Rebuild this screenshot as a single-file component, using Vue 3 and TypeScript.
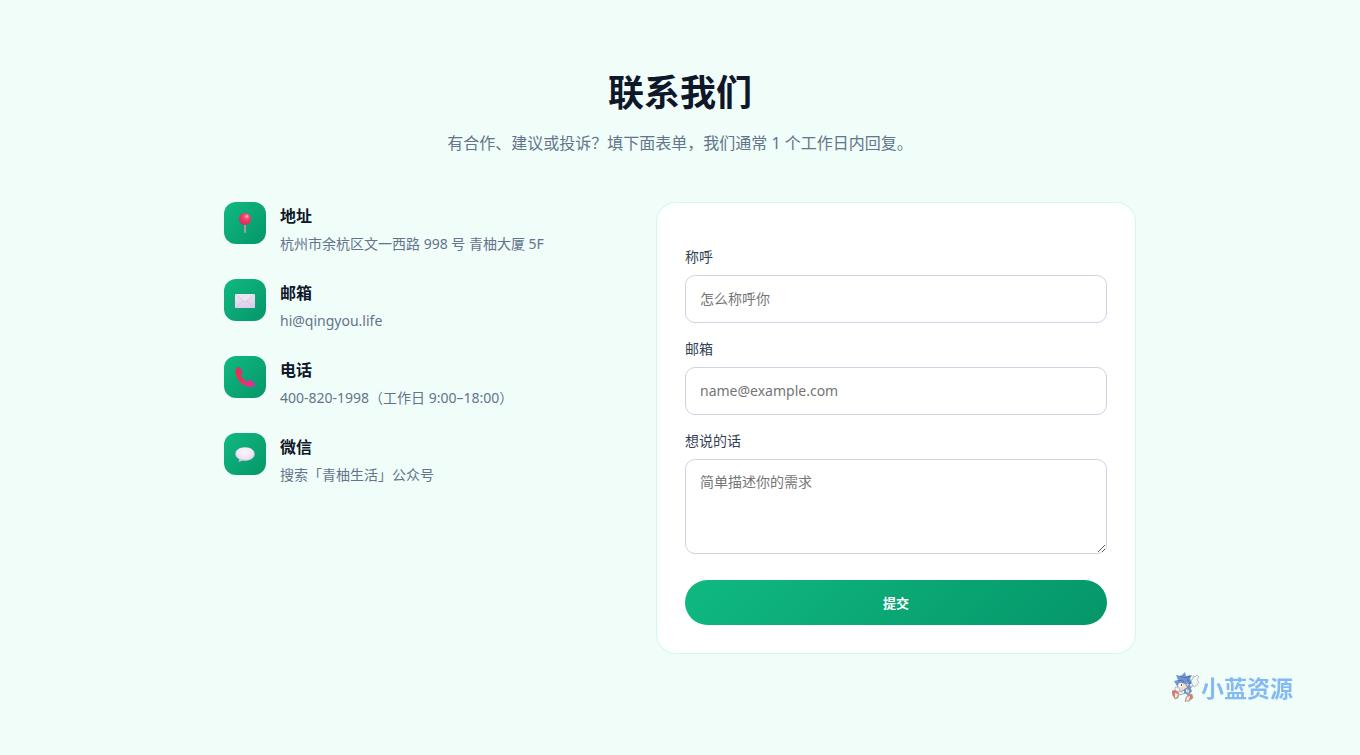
<script setup lang="ts">
import { reactive } from 'vue'

interface Contact {
  icon: 'pin' | 'mail' | 'phone' | 'chat'
  title: string
  text: string
}

const contacts: Contact[] = [
  { icon: 'pin', title: '地址', text: '杭州市余杭区文一西路 998 号 青柚大厦 5F' },
  { icon: 'mail', title: '邮箱', text: 'hi@qingyou.life' },
  { icon: 'phone', title: '电话', text: '400-820-1998（工作日 9:00–18:00）' },
  { icon: 'chat', title: '微信', text: '搜索「青柚生活」公众号' },
]

const form = reactive({ name: '', email: '', message: '' })
</script>

<template>
  <main class="page">
    <header class="intro">
      <h1>联系我们</h1>
      <p>有合作、建议或投诉？填下面表单，我们通常 1 个工作日内回复。</p>
    </header>

    <div class="columns">
      <ul class="contacts">
        <li v-for="item in contacts" :key="item.title" class="contact">
          <span class="badge" aria-hidden="true">
            <svg v-if="item.icon === 'pin'" viewBox="0 0 20 20">
              <defs>
                <radialGradient id="ball" cx=".62" cy=".3" r=".75">
                  <stop offset="0" stop-color="#ff6f8c" />
                  <stop offset=".5" stop-color="#f5345f" />
                  <stop offset="1" stop-color="#cf2a68" />
                </radialGradient>
              </defs>
              <rect x="9.1" y="10" width="1.9" height="10" rx=".8" fill="#9aa5ad" />
              <circle cx="10" cy="6" r="6" fill="url(#ball)" />
              <ellipse cx="12" cy="3.4" rx="1.5" ry="1.1" fill="#ffb3c0" />
            </svg>
            <svg v-else-if="item.icon === 'mail'" viewBox="0 0 20 20">
              <defs>
                <linearGradient id="paper" x1="0" y1="0" x2=".3" y2="1">
                  <stop offset="0" stop-color="#f0eaf2" />
                  <stop offset="1" stop-color="#decdf0" />
                </linearGradient>
              </defs>
              <rect y="4" width="20" height="14" rx=".6" fill="url(#paper)" />
              <path d="M.5 17.4 8.3 10.7M19.5 17.4l-7.800-6.700" fill="none" stroke="#cfc1da" stroke-width=".6" />
              <path d="M.4 4.500 9 11.300q1 .8 2 0l8.600-6.800" fill="#ece5f0" stroke="#cbbfd2" stroke-width=".6" />
            </svg>
            <svg v-else-if="item.icon === 'phone'" viewBox="0 0 20 20">
              <defs>
                <linearGradient id="handset" x1="0" y1="0" x2="1" y2="1">
                  <stop offset="0" stop-color="#e52f45" />
                  <stop offset=".55" stop-color="#ee2f67" />
                  <stop offset="1" stop-color="#e62da4" />
                </linearGradient>
              </defs>
              <path d="M2.500.6C1 1.300.200 3 .5 5.400c.9 7.200 6.600 13.100 13.400 14.300 2.600.4 4.800.1 5.700-1 .5-.8.300-1.500-.2-2.200l-3-3.200c-.7-.7-1.500-.7-2.200-.1l-1.300 1.200c-.5.4-1 .3-1.500 0-2.600-1.500-4.600-3.700-5.600-6.300-.2-.6-.1-1 .3-1.400l1.300-1c.5-.6.500-1.300 0-1.900L4.700.8C4 .1 3.300.200 2.500.6Z" fill="url(#handset)" />
              <path d="m3.900.6 4 4.600-.7 1.500-4.500-4.700ZM15.600 13.100l4 4-.9.900-4.800-4.100Z" fill="#b83b9d" opacity=".75" />
            </svg>
            <svg v-else viewBox="0 0 20 20">
              <defs>
                <radialGradient id="bubble" cx=".5" cy=".38" r=".65">
                  <stop offset="0" stop-color="#f8f5fa" />
                  <stop offset=".6" stop-color="#eee7f3" />
                  <stop offset="1" stop-color="#c5b0d6" />
                </radialGradient>
              </defs>
              <path d="M10 3.200c5.600 0 9.700 2.900 9.700 6.800S15.600 16.800 10 16.800c-1 0-2-.1-2.900-.3-.9.800-2 1.300-3.200 1.300-.4 0-.6-.4-.3-.7.500-.6.700-1.300.7-1.900C1.800 14 .3 12.200.3 10 .3 6.100 4.400 3.200 10 3.200Z" fill="url(#bubble)" />
            </svg>
          </span>
          <div>
            <h2>{{ item.title }}</h2>
            <p>{{ item.text }}</p>
          </div>
        </li>
      </ul>

      <form class="card" @submit.prevent>
        <label for="name">称呼</label>
        <input id="name" v-model="form.name" type="text" placeholder="怎么称呼你" />
        <label for="email">邮箱</label>
        <input id="email" v-model="form.email" type="email" placeholder="name@example.com" />
        <label for="message">想说的话</label>
        <textarea id="message" v-model="form.message" placeholder="简单描述你的需求"></textarea>
        <button type="submit">提交</button>
      </form>
    </div>

    <div class="watermark">
      <svg viewBox="0 0 28 32" aria-hidden="true">
        <path d="m17 18 4-5M11 20l-6-1M14 21l-7 2m8-1 2 4" fill="none" stroke="#aaa9ae" stroke-width="1.200" />
        <path d="M5 14 2 9l4-1-2-5 5 1 4-4 1 4 6-1-2 4 4 4-4 1 1 4-4 1-3 2-5-1Z" fill="#7095d3" />
        <path d="m8 4 5 2 5-2-3 4 4 3-5 1M6 9l4-1 2 3" fill="none" stroke="#4d70b3" stroke-width="1" />
        <path d="M6 14q0-4 4-3l3 1 2 3q-1 3-5 3-4 0-4-4Z" fill="#f1dfc9" />
        <path d="M7 12q3-2 4 1l-1 2-3-.5Z" fill="#fbfdf9" />
        <path d="M9.500 12v2" stroke="#536b63" stroke-width="1" />
        <path d="m15 11 2 1-1 2-2-1Z" fill="#eac98c" />
        <path d="m12 17 6-2 2 4-3 4-5-2Z" fill="#7193ce" />
        <path d="m14 17 3 1v3l-3-1Z" fill="#efdca6" />
        <path d="m20 12-1-4 2-1 0-3 2 1 2-2 2 2-2 3 2 2-2 3-3 2Z" fill="#f2f6f3" stroke="#a4aba8" stroke-width=".7" />
        <path d="m3 15 4 1 1 2-2 2-3-2Z" fill="#f0f3ef" stroke="#a4aba8" stroke-width=".6" />
        <path d="m0 19 3-1 4 3-1 5-3 1-3-5Z" fill="#df7770" stroke="#9b9693" stroke-width=".5" />
        <path d="m16 23 4-1 1 4-4 3-4 .5 1-4Z" fill="#df7770" stroke="#9b9693" stroke-width=".5" />
        <path d="m3 21 3 1-1 3-2 1ZM15 25l3-1-1 4-3 1Z" fill="#f1f1e9" />
      </svg>
      <span>小蓝资源</span>
    </div>
  </main>
</template>

<style>
body {
  margin: 0;
  background: #f0fdf9;
}
</style>

<style scoped>
.page {
  box-sizing: border-box;
  min-height: 100vh;
  max-width: 960px;
  margin: 0 auto;
  padding: 64px 24px;
  color: #0f172a;
  font-family: "Noto Sans", "Noto Sans CJK SC", sans-serif;
}

h1,
h2,
p,
ul {
  margin: 0;
  padding: 0;
}

.intro {
  text-align: center;
  margin-bottom: 46px;
}

h1 {
  font-size: 36px;
  line-height: 58px;
  font-weight: 700;
}

.intro p {
  margin-top: 8px;
  font-size: 16px;
  line-height: 26px;
  color: #64748b;
}

.columns {
  display: grid;
  grid-template-columns: 4fr 5fr;
  gap: 48px;
  align-items: start;
}

.contacts {
  display: grid;
  gap: 23px;
  list-style: none;
}

.contact {
  display: flex;
  gap: 14px;
}

.badge {
  display: flex;
  align-items: center;
  justify-content: center;
  flex: none;
  width: 42px;
  height: 42px;
  border-radius: 12px;
  background: linear-gradient(135deg, #10b981, #059669);
}

.badge svg {
  width: 20px;
  height: 20px;
}

h2 {
  font-size: 16px;
  line-height: 28px;
  font-weight: 700;
}

.contact p {
  margin-top: 2px;
  font-size: 14px;
  line-height: 24px;
  color: #64748b;
}

.card {
  display: flex;
  flex-direction: column;
  padding: 28px;
  background: #fff;
  border: 1px solid #d1fae5;
  border-radius: 20px;
}

label {
  margin: 14px 0 6px;
  font-size: 14px;
  line-height: 24px;
  color: #334155;
}

input,
textarea {
  box-sizing: border-box;
  width: 100%;
  padding: 11px 14px 13px;
  border: 1px solid #cbd5e1;
  border-radius: 10px;
  background: #fff;
  color: #0f172a;
  font-family: inherit;
  font-size: 14px;
  line-height: 22px;
}

input {
  height: 48px;
}

textarea {
  height: 95px;
  resize: vertical;
}

input::placeholder,
textarea::placeholder {
  color: #757575;
}

button {
  height: 45px;
  margin-top: 26px;
  border: 0;
  border-radius: 999px;
  background: linear-gradient(135deg, #10b981, #059669);
  color: #fff;
  font-family: inherit;
  font-size: 13px;
  font-weight: 700;
  cursor: pointer;
}

.watermark {
  position: fixed;
  right: 67px;
  bottom: 51px;
  display: flex;
  align-items: center;
  gap: 1px;
  color: #84b9f4;
  font-size: 23px;
  line-height: 32px;
  font-weight: 700;
}

.watermark svg {
  width: 28px;
  height: 32px;
}
</style>
